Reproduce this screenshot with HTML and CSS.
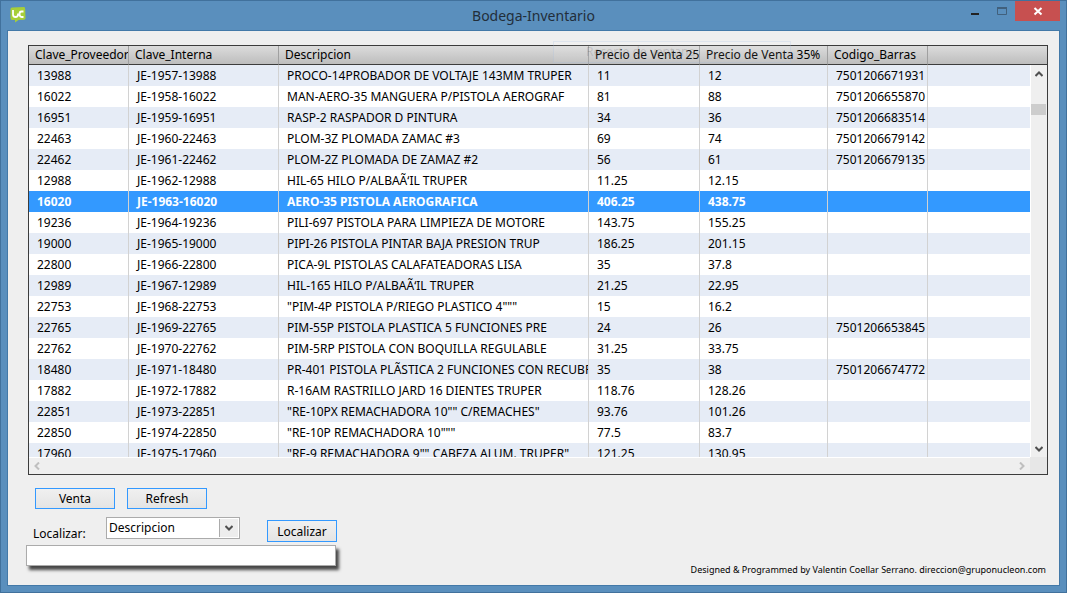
FILE: index.html
```html
<!DOCTYPE html>
<html lang="es">
<head>
<meta charset="utf-8">
<title>Bodega-Inventario</title>
<link rel="stylesheet" href="styles.css">
</head>
<body>
<div class="window">
  <header class="titlebar">
    <svg class="app-icon" width="16" height="16" viewBox="0 0 16 16" aria-hidden="true">
      <path d="M2 0.500L14 0Q15 0 15.200 2L15.500 11Q15.500 12.500 14 12.700L8.500 13L5 15.500V13H2Q.5 13 .5 11V2Q.5 0.500 2 0.500Z" fill="#a6ce39"/>
      <path d="M3 3V7.500Q3 10 5.500 10Q8 10 8 7.500V6.500M13.500 4.500H11.500Q9.500 4.500 9.500 7T11.500 10H13.500" fill="none" stroke="#fff" stroke-width="1.800"/>
    </svg>
    <h1 class="title">Bodega-Inventario</h1>
    <div class="controls">
      <button class="control" type="button" aria-label="Minimizar"><svg width="12" height="12" viewBox="0 0 12 12"><path d="M2 8H10V10H2Z" fill="#222"/></svg></button>
      <button class="control" type="button" aria-label="Maximizar" disabled><svg width="12" height="12" viewBox="0 0 12 12"><path d="M1.500 3V9.500H10.500V3" fill="none" stroke="#41607c"/><path d="M1 3H11" stroke="#41607c" stroke-width="2"/></svg></button>
      <button class="control close" type="button" aria-label="Cerrar"><svg width="10" height="10" viewBox="0 0 10 10"><path d="M1.500 2L8.500 8.500M8.500 2L1.500 8.500" stroke="#fff" stroke-width="2"/></svg></button>
    </div>
  </header>
  <main class="content">
    <section class="grid">
      <div class="grid-view">
        <table class="items">
          <colgroup><col class="c-prov"><col class="c-int"><col class="c-desc"><col class="c-p25"><col class="c-p35"><col class="c-bar"><col></colgroup>
          <thead><tr><th>Clave_Proveedor</th><th>Clave_Interna</th><th>Descripcion</th><th>Precio de Venta 25%</th><th>Precio de Venta 35%</th><th>Codigo_Barras</th><th></th></tr></thead>
          <tbody>
            <tr><td>13988</td><td>JE-1957-13988</td><td>PROCO-14PROBADOR DE VOLTAJE 143MM TRUPER</td><td>11</td><td>12</td><td>7501206671931</td><td></td></tr>
            <tr><td>16022</td><td>JE-1958-16022</td><td>MAN-AERO-35 MANGUERA P/PISTOLA AEROGRAF</td><td>81</td><td>88</td><td>7501206655870</td><td></td></tr>
            <tr><td>16951</td><td>JE-1959-16951</td><td>RASP-2 RASPADOR D PINTURA</td><td>34</td><td>36</td><td>7501206683514</td><td></td></tr>
            <tr><td>22463</td><td>JE-1960-22463</td><td>PLOM-3Z PLOMADA ZAMAC #3</td><td>69</td><td>74</td><td>7501206679142</td><td></td></tr>
            <tr><td>22462</td><td>JE-1961-22462</td><td>PLOM-2Z PLOMADA DE ZAMAZ #2</td><td>56</td><td>61</td><td>7501206679135</td><td></td></tr>
            <tr><td>12988</td><td>JE-1962-12988</td><td>HIL-65 HILO P/ALBAÃ‘IL TRUPER</td><td>11.25</td><td>12.15</td><td></td><td></td></tr>
            <tr class="selected"><td>16020</td><td>JE-1963-16020</td><td>AERO-35 PISTOLA AEROGRAFICA</td><td>406.25</td><td>438.75</td><td></td><td></td></tr>
            <tr><td>19236</td><td>JE-1964-19236</td><td>PILI-697 PISTOLA PARA LIMPIEZA DE MOTORE</td><td>143.75</td><td>155.25</td><td></td><td></td></tr>
            <tr><td>19000</td><td>JE-1965-19000</td><td>PIPI-26 PISTOLA PINTAR BAJA PRESION TRUP</td><td>186.25</td><td>201.15</td><td></td><td></td></tr>
            <tr><td>22800</td><td>JE-1966-22800</td><td>PICA-9L PISTOLAS CALAFATEADORAS LISA</td><td>35</td><td>37.8</td><td></td><td></td></tr>
            <tr><td>12989</td><td>JE-1967-12989</td><td>HIL-165 HILO P/ALBAÃ‘IL TRUPER</td><td>21.25</td><td>22.95</td><td></td><td></td></tr>
            <tr><td>22753</td><td>JE-1968-22753</td><td>"PIM-4P PISTOLA P/RIEGO PLASTICO 4"""</td><td>15</td><td>16.2</td><td></td><td></td></tr>
            <tr><td>22765</td><td>JE-1969-22765</td><td>PIM-55P PISTOLA PLASTICA 5 FUNCIONES PRE</td><td>24</td><td>26</td><td>7501206653845</td><td></td></tr>
            <tr><td>22762</td><td>JE-1970-22762</td><td>PIM-5RP PISTOLA CON BOQUILLA REGULABLE</td><td>31.25</td><td>33.75</td><td></td><td></td></tr>
            <tr><td>18480</td><td>JE-1971-18480</td><td>PR-401 PISTOLA PLÃSTICA 2 FUNCIONES CON RECUBRI</td><td>35</td><td>38</td><td>7501206674772</td><td></td></tr>
            <tr><td>17882</td><td>JE-1972-17882</td><td>R-16AM RASTRILLO JARD 16 DIENTES TRUPER</td><td>118.76</td><td>128.26</td><td></td><td></td></tr>
            <tr><td>22851</td><td>JE-1973-22851</td><td>"RE-10PX REMACHADORA 10"" C/REMACHES"</td><td>93.76</td><td>101.26</td><td></td><td></td></tr>
            <tr><td>22850</td><td>JE-1974-22850</td><td>"RE-10P REMACHADORA 10"""</td><td>77.5</td><td>83.7</td><td></td><td></td></tr>
            <tr><td>17960</td><td>JE-1975-17960</td><td>"RE-9 REMACHADORA 9"" CABEZA ALUM. TRUPER"</td><td>121.25</td><td>130.95</td><td></td><td></td></tr>
          </tbody>
        </table>
        <div class="vscroll">
          <svg width="8" height="6" viewBox="0 0 8 6"><path d="M.5 5L4 1.500L7.500 5" fill="none" stroke="#505050" stroke-width="2"/></svg>
          <div class="thumb"></div>
          <svg width="8" height="6" viewBox="0 0 8 6"><path d="M.5 1L4 4.500L7.500 1" fill="none" stroke="#505050" stroke-width="2"/></svg>
        </div>
      </div>
      <div class="hscroll">
        <div class="htrack">
          <svg width="6" height="8" viewBox="0 0 6 8"><path d="M5 .5L1.500 4L5 7.500" fill="none" stroke="#bfbfbf" stroke-width="2"/></svg>
          <svg width="6" height="8" viewBox="0 0 6 8"><path d="M1 .5L4.500 4L1 7.500" fill="none" stroke="#bfbfbf" stroke-width="2"/></svg>
        </div>
      </div>
      <div class="ghost">Recorte de ventana</div>
    </section>
    <div class="bottom">
      <div class="tools">
        <div class="actions">
          <button class="btn wide" type="button">Venta</button>
          <button class="btn wide" type="button">Refresh</button>
        </div>
        <form class="search">
          <div class="search-row">
            <label class="search-label" for="field">Localizar:</label>
            <div class="select">
              <select id="field"><option>Descripcion</option></select>
              <span class="arrow"><svg width="8" height="6" viewBox="0 0 8 6"><path d="M.5 1L4 4.500L7.500 1" fill="none" stroke="#505050" stroke-width="2"/></svg></span>
            </div>
            <button class="btn find" type="button">Localizar</button>
          </div>
          <input class="query" type="text" aria-label="Texto a localizar">
        </form>
      </div>
      <footer class="credits">Designed &amp; Programmed by Valentin Coellar Serrano. direccion@gruponucleon.com</footer>
    </div>
  </main>
</div>
</body>
</html>
```
FILE: styles.css
```css
* { box-sizing: border-box; }

body {
  margin: 0;
  font: 12px/18px "Noto Sans", "Open Sans", sans-serif;
  color: #000;
}

button, input, select { font: inherit; color: inherit; margin: 0; }
svg { display: block; flex: none; }

.window {
  display: flex;
  flex-direction: column;
  height: 100vh;
  padding: 0 6px 6px;
  border: 1px solid #41719c;
  background: #5a8fbd;
}

.titlebar {
  display: grid;
  grid-template-columns: 1fr auto 1fr;
  align-items: start;
  height: 29px;
  flex: none;
}
.app-icon { margin: 6px 0 0 3px; }
.title { margin: 4px 0 0; font-size: 14px; line-height: 22px; font-weight: 400; color: #222e3a; }
.controls { display: flex; justify-content: flex-end; }
.control {
  display: flex;
  align-items: center;
  justify-content: center;
  width: 27px;
  height: 20px;
  padding: 0;
  border: 0;
  background: none;
}
.close { width: 45px; background: #c75050; }

.content {
  display: flex;
  flex-direction: column;
  flex: 1;
  min-height: 0;
  padding: 14px 11px 9px 18px;
  border: 1px solid #4379a8;
  background: #efefef;
}

.grid {
  position: relative;
  display: flex;
  flex-direction: column;
  flex: 1;
  min-height: 0;
  margin-left: 2px;
  border: 1px solid #3c3c3c;
}
.grid-view { position: relative; flex: 1; min-height: 0; overflow: hidden; background: #fff; }

.items { width: 100%; table-layout: fixed; border-collapse: separate; border-spacing: 0; }
.c-prov, .c-bar { width: 100px; }
.c-int { width: 150px; }
.c-desc { width: 310px; }
.c-p25 { width: 111px; }
.c-p35 { width: 128px; }
.items th, .items td {
  overflow: hidden;
  white-space: nowrap;
  text-align: left;
  font-weight: 400;
}
.items th {
  height: 19px;
  padding: 0 0 0 6px;
  line-height: 18px;
  border-right: 1px solid #a0a0a0;
  border-bottom: 1px solid #3c3c3c;
  background: linear-gradient(#dcdcdc, #bdbdbd);
}
.items td { height: 21px; padding: 0 0 0 8px; line-height: 21px; border-right: 1px solid #d2d2d2; }
.items th:last-child, .items td:last-child { border-right: 0; }
.items tbody tr:nth-child(odd) { background: #e6ecf6; }
.items tbody tr.selected { background: #3399ff; color: #fff; }
.items tbody tr.selected td { font-weight: 700; }

.vscroll {
  position: absolute;
  top: 19px;
  right: 0;
  bottom: 0;
  display: flex;
  flex-direction: column;
  align-items: center;
  width: 17px;
  padding: 6px 1px 5px 0;
  border-left: 1px solid #fff;
  background: #efefef;
}
.thumb { width: 15px; height: 11px; margin: 27px 0 auto; background: #cdcdcd; }

.hscroll { display: flex; height: 17px; padding-right: 17px; background: #e7e7e7; }
.htrack {
  display: flex;
  flex: 1;
  align-items: center;
  justify-content: space-between;
  padding: 0 5px;
  border-top: 1px solid #fff;
  background: #efefef;
}

.ghost {
  position: absolute;
  top: -5px;
  left: 524px;
  width: 238px;
  height: 22px;
  padding-left: 32px;
  border: 1px solid rgba(150, 180, 220, .2);
  background: rgba(255, 255, 255, .08);
  line-height: 20px;
  color: rgba(0, 0, 0, .12);
  pointer-events: none;
}

.bottom { display: flex; justify-content: space-between; align-items: flex-end; flex: none; padding-top: 13px; }
.actions { display: flex; gap: 12px; padding-left: 9px; }
.btn {
  height: 21px;
  padding: 0;
  border: 1px solid #3399ff;
  background: linear-gradient(#f0f0f0, #e4e4e4);
  line-height: 18px;
}
.wide { width: 80px; }
.search-row { display: flex; align-items: flex-start; padding: 8px 0 2px 7px; }
.search-label { width: 73px; padding-top: 8px; }
.select { position: relative; width: 134px; height: 22px; margin-right: 27px; }
.select select {
  appearance: none;
  width: 100%;
  height: 22px;
  padding: 0 24px 0 2px;
  border: 1px solid #ababab;
  border-radius: 0;
  background: #fff;
}
.arrow {
  position: absolute;
  top: 2px;
  right: 2px;
  bottom: 2px;
  display: flex;
  align-items: center;
  justify-content: center;
  width: 19px;
  border-left: 1px solid #ababab;
  background: #ededed;
  pointer-events: none;
}
.find { width: 70px; height: 22px; margin-top: 3px; padding-top: 1px; }
.query {
  display: block;
  width: 310px;
  height: 21px;
  margin-bottom: 10px;
  padding: 0 4px;
  border: 1px solid #ababab;
  background: #fff;
  box-shadow: 3px 4px 3px rgba(0, 0, 0, .7);
}
.credits { margin-right: 2px; font-size: 9px; line-height: 12px; }
```
